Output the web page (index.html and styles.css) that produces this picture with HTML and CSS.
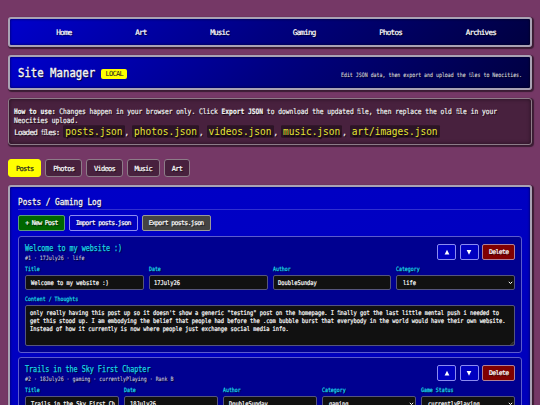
FILE: index.html
```html
<!DOCTYPE html>
<html lang="en">
<head>
    <meta charset="UTF-8">
    <meta name="viewport" content="width=device-width, initial-scale=1.0">
    <title>Site Manager</title>
    <link rel="stylesheet" href="styles.css">
</head>
<body>
    <ul class="nav">
        <li><a href="#">Home</a></li>
        <li><a href="#">Art</a></li>
        <li><a href="#">Music</a></li>
        <li><a href="#">Gaming</a></li>
        <li><a href="#">Photos</a></li>
        <li><a href="#">Archives</a></li>
    </ul>
    <div class="header">
        <h1 class="narrow">Site Manager</h1>
        <span class="badge">LOCAL</span>
        <p class="narrow">Edit JSON data, then export and upload the <span class="fi">fi</span>les to Neocities.</p>
    </div>
    <div class="info">
        <p class="narrow"><b>How to use:</b> Changes happen in your browser only. Click <b>Export JSON</b> to download the updated <span class="fi">fi</span>le, then replace the old <span class="fi">fi</span>le in your<br>Neocities upload.</p>
        <p class="files">Loaded <span class="fi">fi</span>les: <code>posts.json</code>, <code>photos.json</code>, <code>videos.json</code>, <code>music.json</code>, <code>art/images.json</code></p>
    </div>
    <div class="tabs">
        <button class="tab active">Posts</button>
        <button class="tab">Photos</button>
        <button class="tab">Videos</button>
        <button class="tab">Music</button>
        <button class="tab">Art</button>
    </div>
    <div class="panel">
        <div class="panel-head"><h2 class="narrow">Posts / Gaming Log</h2></div>
        <div class="tools">
            <button class="btn green">+ New Post</button>
            <button class="btn">Import posts.json</button>
            <button class="btn gray">Export posts.json</button>
        </div>

        <div class="card">
            <div class="card-head">
                <div class="card-title">
                    <h3 class="narrow">Welcome to my website :)</h3>
                    <p class="narrow">#1 · 17July26 · life</p>
                </div>
                <button class="btn move"><svg viewBox="0 0 6 6"><path d="M3 0.8L5.4 5.5H0.6Z"/></svg></button>
                <button class="btn move"><svg viewBox="0 0 6 6"><path d="M3 5.7L0.6 1H5.4Z"/></svg></button>
                <button class="btn red">Delete</button>
            </div>
            <div class="fields">
                <div class="field"><label class="narrow">Title</label><div class="input"><p class="narrow">Welcome to my website :)</p></div></div>
                <div class="field"><label class="narrow">Date</label><div class="input"><p class="narrow">17July26</p></div></div>
                <div class="field"><label class="narrow">Author</label><div class="input"><p class="narrow">DoubleSunday</p></div></div>
                <div class="field"><label class="narrow">Category</label><div class="input select"><p class="narrow">life</p><svg viewBox="0 0 5 4"><path d="M0.8 0.8L2.5 2.6L4.2 0.8"/></svg></div></div>
            </div>
            <div class="field content">
                <label class="narrow">Content / Thoughts</label>
                <div class="textarea"><p class="narrow">only really having this post up so it doesn't show a generic "testing" post on the homepage. I <span class="fi">fi</span>nally got the last little mental push i needed to<br>get this stood up. I am embodying the belief that people had before the .com bubble burst that everybody in the world would have their own website.<br>Instead of how it currently is now where people just exchange social media info.</p><svg viewBox="0 0 4 4"><path d="M0.5 4L4 0.5M2.5 4L4 2.5"/></svg></div>
            </div>
        </div>

        <div class="card">
            <div class="card-head">
                <div class="card-title">
                    <h3 class="narrow">Trails in the Sky First Chapter</h3>
                    <p class="narrow">#2 · 18July26 · gaming · currentlyPlaying · Rank B</p>
                </div>
                <button class="btn move"><svg viewBox="0 0 6 6"><path d="M3 0.8L5.4 5.5H0.6Z"/></svg></button>
                <button class="btn move"><svg viewBox="0 0 6 6"><path d="M3 5.7L0.6 1H5.4Z"/></svg></button>
                <button class="btn red">Delete</button>
            </div>
            <div class="fields">
                <div class="field"><label class="narrow">Title</label><div class="input"><p class="narrow">Trails in the Sky First Ch</p></div></div>
                <div class="field"><label class="narrow">Date</label><div class="input"><p class="narrow">18July26</p></div></div>
                <div class="field"><label class="narrow">Author</label><div class="input"><p class="narrow">DoubleSunday</p></div></div>
                <div class="field"><label class="narrow">Category</label><div class="input select"><p class="narrow">gaming</p><svg viewBox="0 0 5 4"><path d="M0.8 0.8L2.5 2.6L4.2 0.8"/></svg></div></div>
                <div class="field"><label class="narrow">Game Status</label><div class="input select"><p class="narrow">currentlyPlaying</p><svg viewBox="0 0 5 4"><path d="M0.8 0.8L2.5 2.6L4.2 0.8"/></svg></div></div>
            </div>
        </div>
    </div>
</body>
</html>
```

FILE: styles.css
```css
*{
    padding: 0;
    margin: 0;
    box-sizing: border-box;
}
html{
    height: 100%;
    overflow: hidden;
}
body{
    height: 405px;
    overflow: hidden;
    padding: 17px 8px 0 8.3px;
    background-color: #753866;
    color: #f4f4f4;
    font-family: "DejaVu Sans Mono", monospace;
    font-size: 7.56px;
    text-shadow: 1px 1px 1px rgba(0, 0, 0, .8);
}
ul{
    list-style: none;
}
a{
    color: #fff;
    text-decoration: none;
}
button{
    font-family: inherit;
    color: #fff;
    text-shadow: inherit;
    white-space: nowrap;
}
/* half-em wide characters */
.narrow{
    transform: scaleX(.8306);
    transform-origin: left center;
    white-space: nowrap;
}
a,
button,
.files,
.badge{
    letter-spacing: -0.102em;
}
/* two letters in one cell */
.fi{
    display: inline-block;
    width: .602em;
    letter-spacing: -0.1em;
    transform: scaleX(.58);
    transform-origin: left center;
}
.files .fi{
    width: .5em;
}
.nav,
.header,
.panel{
    border: 2px solid #a9a2b4;
    border-radius: 3px;
    background: linear-gradient(135deg, #0000cc, #000080 50%, #000040);
    box-shadow: 1px 1px 1px 1px rgba(0, 0, 0, .5), inset 0 0 3px rgba(0, 0, 0, .6);
}
.nav{
    display: flex;
    justify-content: space-between;
    align-items: center;
    height: 30px;
    padding: 0 34px 0 46px;
    font-size: 7.6px;
}
.header{
    display: flex;
    align-items: center;
    height: 35px;
    margin-top: 8px;
    padding: 0 8px;
}
.header h1{
    width: 77px;
    margin-top: 1px;
    font-size: 12.85px;
    line-height: 14px;
    font-weight: normal;
    -webkit-text-stroke: .4px #f4f4f4;
}
.header .badge{
    width: 26px;
    height: 10px;
    margin: 3px 0 0 6px;
    border-radius: 2px;
    background-color: #ff0;
    color: #222;
    font-size: 7px;
    line-height: 10px;
    text-align: center;
    text-shadow: none;
}
.header p{
    margin: 3px 0 0 auto;
    color: #d4d4dc;
    font-size: 5.94px;
    transform-origin: right center;
    -webkit-text-stroke: .1px currentColor;
}
.info{
    height: 47px;
    margin-top: 8px;
    padding: 8px 5px 0;
    border: 1px solid #8d7c88;
    border-radius: 3px;
    background-color: #48213e;
    box-shadow: 1px 1px 1px 1px rgba(0, 0, 0, .5), inset 0 0 4px rgba(0, 0, 0, .5);
    line-height: 9.4px;
}
.info p{
    -webkit-text-stroke: .2px currentColor;
}
.info .files{
    line-height: 13px;
    white-space: nowrap;
}
.info code{
    display: inline-block;
    height: 11px;
    padding: 0 2px;
    border-radius: 1px;
    background-color: #2c1426;
    color: #e6e632;
    font-family: "DejaVu Sans Mono", monospace;
    font-size: 9.5px;
    line-height: 11px;
    letter-spacing: 0;
    transform: scaleY(1.12);
    -webkit-text-stroke: 0;
}
.tabs{
    display: flex;
    gap: 4px;
    margin-top: 14px;
}
.tab{
    height: 18px;
    padding: 0 6.8px;
    border: 1px solid #8d7c88;
    border-radius: 3px;
    background-color: #48213e;
    font-size: 7.02px;
}
.tab.active{
    border-color: #ff0;
    background-color: #ff0;
    color: #222;
    text-shadow: none;
}
.panel{
    height: 420px;
    margin-top: 8px;
    padding: 8px 8px 0;
    background: linear-gradient(160deg, #0000c8, #0000b4);
}
.panel-head{
    height: 15px;
    border-bottom: 1px solid #3030cf;
}
.panel h2{
    font-size: 9.25px;
    line-height: 14px;
    font-weight: normal;
    -webkit-text-stroke: .3px #f4f4f4;
}
.tools{
    display: flex;
    gap: 4px;
    margin-top: 5px;
}
.btn{
    height: 16px;
    padding: 0 6px;
    border: 1px solid #8c8cf0;
    border-radius: 2px;
    background-color: #0000c0;
    font-size: 6.48px;
}
.btn.green{
    border-color: #5c9c7c;
    background-color: #060;
}
.btn.gray{
    border-color: #9a9a9a;
    background-color: #444;
}
.btn.red{
    width: 33px;
    border-color: #b08098;
    background-color: #800000;
}
.btn.move{
    display: flex;
    align-items: center;
    justify-content: center;
    width: 19px;
    padding: 0;
}
.btn.move svg{
    width: 6px;
    height: 6px;
    fill: #fff;
}
.card{
    height: 117px;
    margin-top: 5px;
    padding: 7px 6px 0;
    border: 1px solid #5c5ccc;
    border-radius: 3px;
    background-color: #000090;
}
.card + .card{
    margin-top: 4px;
}
.card-head{
    display: flex;
    gap: 3.5px;
}
.card-title{
    flex: 1;
}
.card-title h3{
    color: #1ad6e6;
    font-size: 8.1px;
    line-height: 9px;
    font-weight: normal;
    -webkit-text-stroke: .25px #1ad6e6;
}
.card-title p{
    color: #c4c4dc;
    font-size: 5.94px;
    line-height: 10px;
    -webkit-text-stroke: .1px currentColor;
}
.fields{
    display: flex;
    gap: 5px;
    margin-top: 2px;
}
.field{
    flex: 1 1 0;
    min-width: 0;
}
.field label{
    display: block;
    height: 10px;
    color: #1ad6e6;
    font-size: 5.92px;
    line-height: 9px;
    -webkit-text-stroke: .25px currentColor;
}
.input,
.textarea{
    border: 1px solid #55557c;
    border-radius: 2px;
    background-color: #111;
    color: #fff;
    font-size: 6.48px;
    text-shadow: none;
}
.input p,
.textarea p,
.nav a,
.btn,
.tab{
    -webkit-text-stroke: .2px currentColor;
}
.input{
    height: 15px;
    padding: 0 4.5px;
    line-height: 14px;
    overflow: hidden;
}
.input.select{
    display: flex;
    align-items: center;
    justify-content: space-between;
    padding: 0 1px 0 6px;
}
.input.select svg{
    width: 5px;
    height: 4px;
    fill: none;
    stroke: #fff;
}
.content{
    margin-top: 5px;
}
.textarea{
    position: relative;
    height: 41px;
    padding: 3px 4px 0;
    line-height: 8.1px;
}
.textarea svg{
    position: absolute;
    right: 0;
    bottom: 0;
    width: 4px;
    height: 4px;
    stroke: #888;
    stroke-width: .5;
}
```
